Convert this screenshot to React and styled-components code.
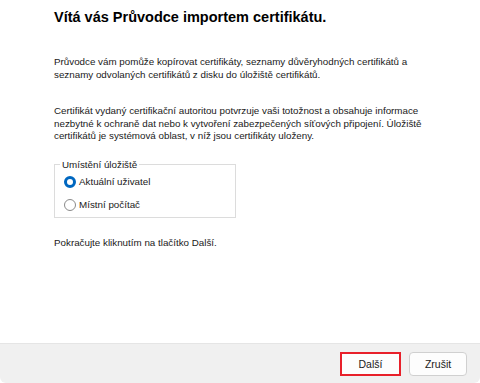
import React from 'react';
import styled, { createGlobalStyle } from 'styled-components';

const GlobalStyle = createGlobalStyle`
  html, body {
    margin: 0;
    padding: 0;
    background: #ffffff;
  }
  body {
    font-family: 'Liberation Sans', Arial, sans-serif;
    color: #1a1a1a;
  }
`;

// Окно мастера
const Window = styled.div`
  width: 480px;
  height: 383px;
  display: flex;
  flex-direction: column;
  background: #ffffff;
  border-radius: 0 0 6px 6px;
  overflow: hidden;
`;

const Content = styled.div`
  flex: 1;
  padding: 9px 20px 0 54px;
`;

const Title = styled.h1`
  margin: 0;
  font-size: 14.5px;
  font-weight: bold;
  color: #000;
  line-height: 16px;
`;

const Paragraph = styled.p`
  margin: ${p => p.top || 0}px 0 0 0;
  font-size: 9.8px;
  line-height: 12.5px;
  color: #1a1a1a;
  white-space: nowrap;
`;

const GroupBox = styled.fieldset`
  margin: 16px 0 0 0;
  width: 182px;
  height: 59px;
  box-sizing: border-box;
  border: 1px solid #dcdcdc;
  padding: 6px 0 0 9px;
  display: flex;
  flex-direction: column;
  gap: 11px;
`;

const Legend = styled.legend`
  font-size: 9.8px;
  padding: 0 2px;
  margin-left: -4px;
  color: #1a1a1a;
`;

const RadioRow = styled.label`
  display: flex;
  align-items: center;
  gap: 3px;
  font-size: 9.8px;
  line-height: 12px;
`;

const RadioDot = styled.span`
  width: 12px;
  height: 12px;
  box-sizing: border-box;
  border-radius: 50%;
  border: ${p => (p.checked ? '3.5px solid #0067c0' : '1px solid #8a8a8a')};
  background: #fff;
`;

// Нижняя панель с кнопками
const Footer = styled.div`
  height: 39px;
  background: #f0f0f0;
  border-top: 1px solid #e5e5e5;
  display: flex;
  justify-content: flex-end;
  align-items: center;
  gap: 8px;
  padding: 0 13px 0 0;
`;

const Button = styled.button`
  width: ${p => p.w}px;
  height: 24px;
  box-sizing: border-box;
  background: #fdfdfd;
  border: ${p => (p.highlight ? '2px solid #e8202a' : '1px solid #d0d0d0')};
  border-radius: ${p => (p.highlight ? '0' : '4px')};
  font-family: 'Liberation Sans', Arial, sans-serif;
  font-size: 10.5px;
  color: #1a1a1a;
  padding: 0;
`;

export default function App() {
  return (
    <>
      <GlobalStyle />
      <Window>
        <Content>
          <Title>Vítá vás Průvodce importem certifikátu.</Title>
          <Paragraph top={31}>
            Průvodce vám pomůže kopírovat certifikáty, seznamy důvěryhodných certifikátů a
            <br />
            seznamy odvolaných certifikátů z disku do úložiště certifikátů.
          </Paragraph>
          <Paragraph top={24}>
            Certifikát vydaný certifikační autoritou potvrzuje vaši totožnost a obsahuje informace
            <br />
            nezbytné k ochraně dat nebo k vytvoření zabezpečených síťových připojení. Úložiště
            <br />
            certifikátů je systémová oblast, v níž jsou certifikáty uloženy.
          </Paragraph>
          <GroupBox>
            <Legend>Umístění úložiště</Legend>
            <RadioRow>
              <RadioDot checked />
              Aktuální uživatel
            </RadioRow>
            <RadioRow>
              <RadioDot />
              Místní počítač
            </RadioRow>
          </GroupBox>
          <Paragraph top={19}>Pokračujte kliknutím na tlačítko Další.</Paragraph>
        </Content>
        <Footer>
          <Button w={61} highlight>Další</Button>
          <Button w={58}>Zrušit</Button>
        </Footer>
      </Window>
    </>
  );
}
